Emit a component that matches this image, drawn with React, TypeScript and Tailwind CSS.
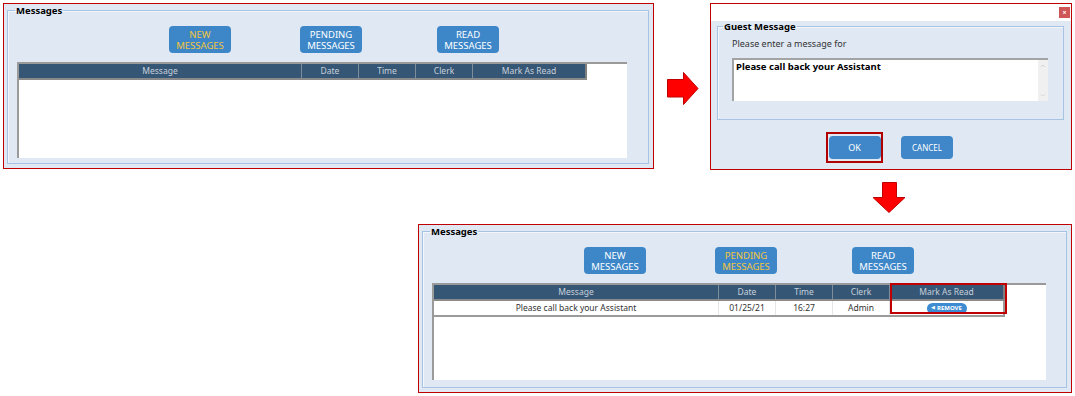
import React from "react";

const font = { fontFamily: '"Noto Sans", "DejaVu Sans", sans-serif' };

type Col = { label: string; w: number };

function NavButton({ top, bottom, active }: { top: string; bottom: string; active?: boolean }) {
  return (
    <div
      className={`flex h-[27px] w-[62px] flex-col items-center justify-center rounded-[4px] bg-[#3d87c9] text-[9.5px] leading-[11px] ${
        active ? "text-[#f2c53a]" : "text-white"
      }`}
    >
      <span>{top}</span>
      <span>{bottom}</span>
    </div>
  );
}

function MessagesTable({
  cols,
  width,
  height,
  rows,
  highlight,
}: {
  cols: Col[];
  width: number;
  height: number;
  rows?: string[][];
  highlight?: boolean;
}) {
  return (
    <div
      className="relative border-l-2 border-t-2 border-[#9a9a9a] bg-white"
      style={{ width, height }}
    >
      <div className="flex">
        <div className="flex border-b-2 border-[#8a8a8a]">
          {cols.map((c, i) => (
            <div
              key={c.label}
              className={`flex h-[14px] items-center justify-center bg-[#365675] text-[8.5px] text-[#c7d1dc] ${
                i < cols.length - 1 ? "border-r border-[#7e8d9c]" : "border-r-2 border-r-[#7e7e7e]"
              }`}
              style={{ width: c.w }}
            >
              {c.label}
            </div>
          ))}
        </div>
      </div>
      {rows?.map((r, ri) => (
        <div key={ri} className="flex">
          <div className="flex border-b-2 border-[#9a9a9a]">
            {cols.map((c, i) => (
              <div
                key={c.label}
                className={`flex h-[14px] items-center justify-center text-[8.5px] text-[#333] ${
                  i < cols.length - 1 ? "border-r border-[#e6e6e6]" : "border-r-2 border-r-[#9a9a9a]"
                }`}
                style={{ width: c.w }}
              >
                {r[i] === "REMOVE" ? (
                  <span className="flex h-[11px] w-[40px] items-center justify-center gap-[2px] rounded-full bg-[#3d8bd0] text-[6px] font-bold text-white">
                    <span className="text-[5px]">◀</span>REMOVE
                  </span>
                ) : (
                  r[i]
                )}
              </div>
            ))}
          </div>
        </div>
      ))}
      {highlight && (
        <div className="absolute left-[456px] top-[-2px] h-[31px] w-[117px] border-2 border-[#c00000]" />
      )}
    </div>
  );
}

function MessagesPanel({
  active,
  cols,
  tableW,
  tableH,
  rows,
  highlight,
  width,
  height,
}: {
  active: number;
  cols: Col[];
  tableW: number;
  tableH: number;
  rows?: string[][];
  highlight?: boolean;
  width: number;
  height: number;
}) {
  return (
    <div
      className="border border-[#c00000] bg-[#dfe8f3] pb-[4px] pl-[3px] pr-[4px]"
      style={{ width, height }}
    >
      <fieldset className="h-full border border-[#a7c3e3] shadow-[inset_1px_1px_0_#f3f7fc] pl-[1px]">
        <legend className="ml-[6px] px-[1px] text-[9.5px] font-bold leading-[13px] text-black">
          Messages
        </legend>
        <div className="mt-[9px] flex">
          <div className="ml-[160px]">
            <NavButton top="NEW" bottom="MESSAGES" active={active === 0} />
          </div>
          <div className="ml-[69px]">
            <NavButton top="PENDING" bottom="MESSAGES" active={active === 1} />
          </div>
          <div className="ml-[75px]">
            <NavButton top="READ" bottom="MESSAGES" active={active === 2} />
          </div>
        </div>
        <div className="ml-[8px] mt-[9px]">
          <MessagesTable cols={cols} width={tableW} height={tableH} rows={rows} highlight={highlight} />
        </div>
      </fieldset>
    </div>
  );
}

function GuestDialog() {
  return (
    <div className="flex h-[167px] w-[362px] flex-col border border-[#c00000] bg-[#dfe8f3]">
      <div className="flex h-[17px] justify-end bg-white pr-[1px] pt-[3px]">
        <div className="flex h-[11px] w-[11px] items-center justify-center bg-[#cf5656] text-[7px] font-bold leading-none text-white">
          ×
        </div>
      </div>
      <fieldset className="ml-[6px] mr-[7px] h-[99px] border border-[#a7c3e3] shadow-[inset_1px_1px_0_#f3f7fc]">
        <legend className="ml-[5px] px-[1px] text-[9.5px] font-bold leading-[11px] text-black">
          Guest Message
        </legend>
        <div className="ml-[14px] mt-[6px] text-[9px] leading-[12px] text-[#333]">
          Please enter a message for
        </div>
        <div className="ml-[14px] mt-[8px] flex h-[43px] w-[316px] border-l-2 border-t-2 border-[#a3a3a3] bg-white">
          <div className="flex-1 pl-[2px] pt-[1px] text-[9.5px] font-bold leading-[12px] text-black">
            Please call back your Assistant
          </div>
          <div className="flex w-[10px] flex-col items-center justify-between bg-[#f0f0f0] py-[2px] text-[6px] leading-none text-[#b0b0b0]">
            <span>︿</span>
            <span>﹀</span>
          </div>
        </div>
      </fieldset>
      <div className="mt-[12px] flex">
        <div className="ml-[115px] flex h-[31px] w-[57px] items-center justify-center border-2 border-[#b00000]">
          <div className="flex h-[23px] w-[52px] items-center justify-center rounded-[4px] bg-[#3f87c8] text-[9px] text-white">
            OK
          </div>
        </div>
        <div className="ml-[18px] mt-[4px] flex h-[23px] w-[52px] items-center justify-center rounded-[4px] bg-[#3f87c8] text-[8px] text-white">
          CANCEL
        </div>
      </div>
    </div>
  );
}

function RightArrow() {
  return (
    <svg width="32" height="33" viewBox="0 0 32 33">
      <polygon
        points="0.5,7.5 16.5,7.5 16.5,0.5 31,16.5 16.5,32.5 16.5,25 0.5,25"
        fill="#ff0000"
        stroke="#c00000"
        strokeWidth="1"
      />
    </svg>
  );
}

function DownArrow() {
  return (
    <svg width="34" height="31" viewBox="0 0 34 31">
      <polygon
        points="10.5,0.5 24.5,0.5 24.5,15.5 33,15.5 17,30.5 1,15.5 10.5,15.5"
        fill="#ff0000"
        stroke="#c00000"
        strokeWidth="1"
      />
    </svg>
  );
}

export default function App() {
  const colsTop: Col[] = [
    { label: "Message", w: 283 },
    { label: "Date", w: 57 },
    { label: "Time", w: 57 },
    { label: "Clerk", w: 57 },
    { label: "Mark As Read", w: 114 },
  ];
  const colsBottom: Col[] = [
    { label: "Message", w: 285 },
    { label: "Date", w: 57 },
    { label: "Time", w: 57 },
    { label: "Clerk", w: 57 },
    { label: "Mark As Read", w: 115 },
  ];

  return (
    <div className="h-[396px] w-[1075px] overflow-hidden bg-white" style={font}>
      <div className="flex pt-[3px]">
        <div className="ml-[3px]">
          <MessagesPanel
            active={0}
            cols={colsTop}
            tableW={610}
            tableH={96}
            width={651}
            height={166}
          />
        </div>
        <div className="ml-[13px] mt-[69px]">
          <RightArrow />
        </div>
        <div className="ml-[11px]">
          <GuestDialog />
        </div>
      </div>
      <div className="ml-[872px] mt-[12px]">
        <DownArrow />
      </div>
      <div className="ml-[418px] mt-[11px]">
        <MessagesPanel
          active={1}
          cols={colsBottom}
          tableW={614}
          tableH={97}
          rows={[["Please call back your Assistant", "01/25/21", "16:27", "Admin", "REMOVE"]]}
          highlight
          width={654}
          height={169}
        />
      </div>
    </div>
  );
}
